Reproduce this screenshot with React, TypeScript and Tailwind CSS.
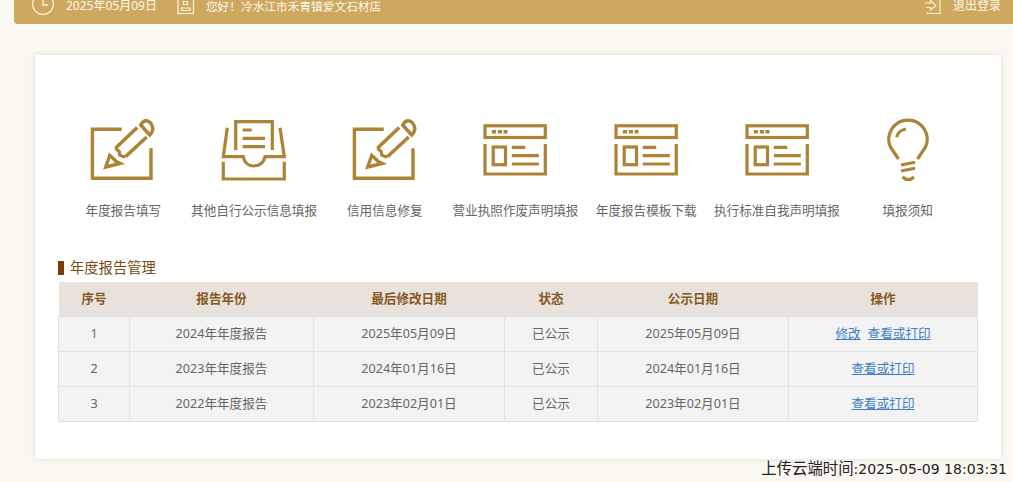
const font = "[font-family:'Noto_Sans','Noto_Sans_CJK_SC',sans-serif]";

function PencilIcon() {
  return (
    <svg width="64" height="64" viewBox="1.3 0 64 64" fill="none" stroke="#ad8335" strokeWidth="3.4" className="overflow-visible">
      <path d="M32 9.3H2.7V58.3H61.3V28.3" />
      <path d="M25.7 28.3 47.5 7.5M35.7 36.7 57 17" strokeWidth="3.6" />
      <path d="M25.7 28.3 29.5 31.5 30 35 33 36.5 35.7 36.7" strokeWidth="3.2" />
      <path d="M20 35.5 16 47 30.5 43.5 26.5 41.5 23 38Z" strokeWidth="3.4" />
      <path d="M51 5C53 1.5 56 0 59 1.5 62 3 63.5 7.5 63 10 62.5 12 61.5 13.5 60 15Z" strokeWidth="3.4" />
    </svg>
  );
}

function InboxIcon() {
  return (
    <svg width="64" height="64" viewBox="2 0 64 64" fill="none" stroke="#ad8335" strokeWidth="3.2" className="overflow-visible">
      <path d="M15.7 30V1.7H52.3V30" />
      <path d="M22.7 10H31.7M22.7 18.3H45M22.7 26.7H45" />
      <path d="M7.3 7.7 3.3 36.7H23.3C24.5 43 29 46 34 46 39 46 43.5 43 45 36.7H64.3L60 7.7" />
      <path d="M3.3 41.7V59H64.3V41.7" />
    </svg>
  );
}

function WindowIcon() {
  return (
    <svg width="64" height="64" viewBox="0.5 0 64 64" fill="none" stroke="#ad8335" strokeWidth="3.2" className="overflow-visible">
      <rect x="2.5" y="5.8" width="60.3" height="11.7" />
      <path d="M9.3 11.8H13.5M15.3 11.8H19.5M21 11.8H25" strokeWidth="3.4" />
      <path d="M2.5 24V54H62.8V24" />
      <rect x="10.7" y="27" width="12.3" height="17.7" />
      <path d="M29.3 27.3H42.7M29.3 35.7H56.3M29.3 44H56.3" />
    </svg>
  );
}

function BulbIcon() {
  return (
    <svg width="64" height="64" viewBox="-10 0 64 64" fill="none" stroke="#ad8335" strokeWidth="3.2" className="overflow-visible">
      <path d="M12.5 39 4.3 26.7A19.2 19.2 0 1 1 39.7 26.7L31.5 39" />
      <path d="M10.7 17.3C11.5 13 15 9.8 20 9" />
      <path d="M15 45 29 42.3M15 51 29 48.3" />
      <path d="M16.7 56.7C19 60.5 25 60.5 27.7 56.7" />
    </svg>
  );
}

const shortcuts = [
  { label: "年度报告填写", icon: <PencilIcon /> },
  { label: "其他自行公示信息填报", icon: <InboxIcon /> },
  { label: "信用信息修复", icon: <PencilIcon /> },
  { label: "营业执照作废声明填报", icon: <WindowIcon /> },
  { label: "年度报告模板下载", icon: <WindowIcon /> },
  { label: "执行标准自我声明填报", icon: <WindowIcon /> },
  { label: "填报须知", icon: <BulbIcon /> },
];

const rows = [
  { id: 1, name: "2024年年度报告", modified: "2025年05月09日", published: "2025年05月09日", canEdit: true },
  { id: 2, name: "2023年年度报告", modified: "2024年01月16日", published: "2024年01月16日", canEdit: false },
  { id: 3, name: "2022年年度报告", modified: "2023年02月01日", published: "2023年02月01日", canEdit: false },
];

export default function App() {
  return (
    <div className={`${font} w-[1013px] h-[482px] overflow-hidden bg-[#fbf8f1]`}>
      {/* Top bar, page is scrolled so it is cut off */}
      <div className="ml-[14px] h-[24px] bg-[#cfa860] rounded-bl-[4px] flex items-start text-[12px] leading-[12px] text-[#fdf8ee] overflow-hidden">
        <svg width="24" height="24" viewBox="0 0 24 24" fill="none" stroke="#fdf3df" strokeWidth="1.3" className="ml-[17px] -mt-[8px] shrink-0">
          <circle cx="12" cy="12" r="10.4" />
          <path d="M12 6V13H17" />
        </svg>
        <span className="ml-[11px]">2025年05月09日</span>
        <svg width="18" height="18" viewBox="0 0 18 18" fill="none" stroke="#fdf3df" strokeWidth="1.2" className="ml-[20px] -mt-[2px] shrink-0">
          <rect x="1" y="0" width="15.5" height="15.5" />
          <path d="M6.5 3.5H10.5V6.5H6.5ZM4.5 12.5H13V10H4.5Z" />
        </svg>
        <span className="ml-[11px] text-[11.7px]">您好！冷水江市禾青镇爱文石材店</span>
        <svg width="18" height="18" viewBox="0 0 18 18" fill="none" stroke="#fdf3df" strokeWidth="1.1" className="ml-auto -mt-[2px] shrink-0">
          <path d="M3.5 14.5V15.5H16V0H3.5" />
          <path d="M0.5 5H6.5V2.5L12 7.5 6.5 12V9.5H2" />
        </svg>
        <span className="ml-[11px] mr-[12px]">退出登录</span>
      </div>

      {/* Main card */}
      <div className="ml-[35px] mt-[31px] w-[966px] h-[404px] bg-white shadow-[0_0_6px_rgba(0,0,0,0.1)] px-[23px] pt-[65px]">
        <div className="grid grid-cols-7 w-[915px]">
          {shortcuts.map((item) => (
            <div key={item.label} className="flex flex-col items-center">
              {item.icon}
              <span className="mt-[19px] text-[12.6px] leading-[16px] text-[#666666] whitespace-nowrap">{item.label}</span>
            </div>
          ))}
        </div>

        <div className="mt-[41px] flex items-center h-[16px]">
          <span className="w-[6px] h-[14px] bg-[#7a3e00]" />
          <span className="ml-[6px] text-[14.3px] text-[#7a4a10]">年度报告管理</span>
        </div>

        <table className="mt-[6px] w-[919px] table-fixed border-collapse text-[12.6px] text-center text-[#666666]">
          <colgroup>
            <col className="w-[71px]" />
            <col className="w-[184px]" />
            <col className="w-[191px]" />
            <col className="w-[93px]" />
            <col className="w-[191px]" />
            <col className="w-[189px]" />
          </colgroup>
          <thead>
            <tr className="h-[34.5px] bg-[#e9e2dc] text-[#85591f] font-bold">
              <th>序号</th>
              <th>报告年份</th>
              <th>最后修改日期</th>
              <th>状态</th>
              <th>公示日期</th>
              <th>操作</th>
            </tr>
          </thead>
          <tbody>
            {rows.map((row) => (
              <tr key={row.id} className="h-[35px] bg-[#f3f3f3]">
                <td className="border border-[#e2e2e2]">{row.id}</td>
                <td className="border border-[#e2e2e2]">{row.name}</td>
                <td className="border border-[#e2e2e2]">{row.modified}</td>
                <td className="border border-[#e2e2e2]">已公示</td>
                <td className="border border-[#e2e2e2]">{row.published}</td>
                <td className="border border-[#e2e2e2] text-[#3f7fc5]">
                  {row.canEdit && <a className="underline mr-[7px]">修改</a>}
                  <a className="underline">查看或打印</a>
                </td>
              </tr>
            ))}
          </tbody>
        </table>
      </div>

      <div className="flex justify-end items-baseline mt-[1px] pr-[6px] text-[14px] leading-[18px] text-[#222222] [font-family:'DejaVu_Sans','Noto_Sans_CJK_SC',sans-serif]">
        <span className="text-[15.4px]">上传云端时间</span>:2025-05-09 18:03:31
      </div>
    </div>
  );
}
